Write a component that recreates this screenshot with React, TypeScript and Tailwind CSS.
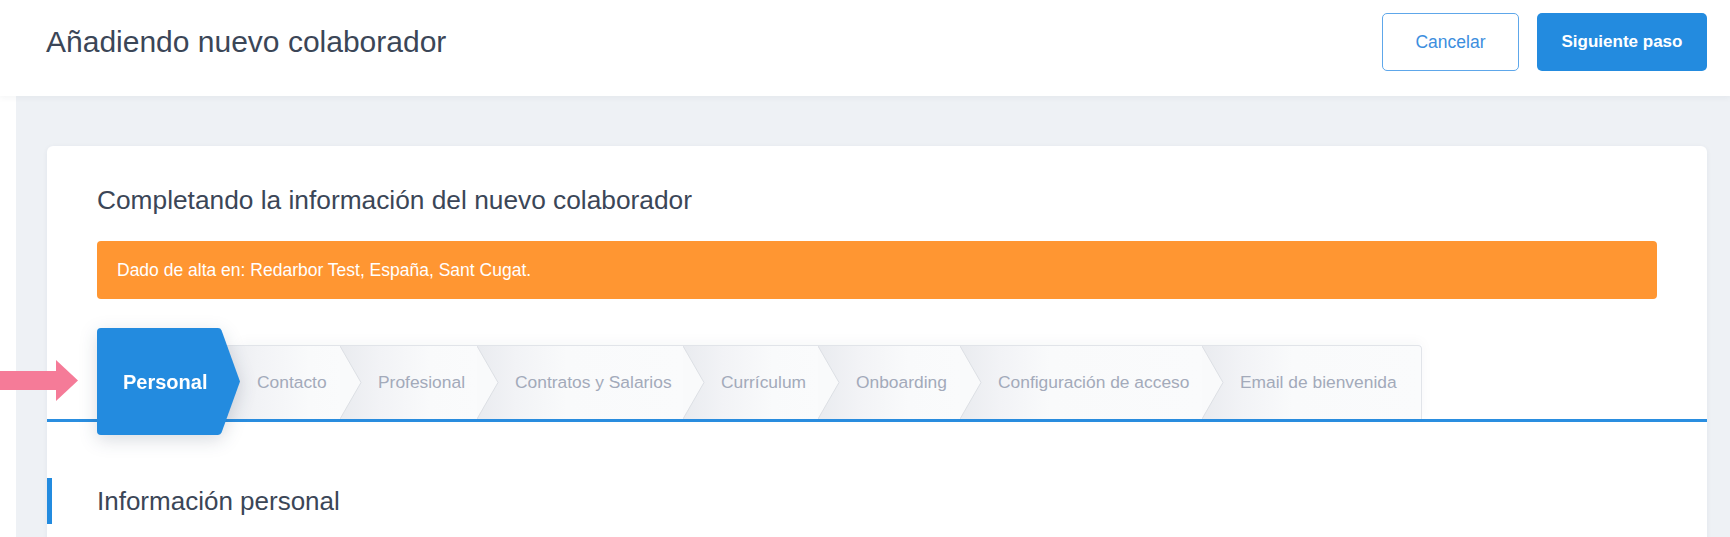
const steps = [
  { label: "Contacto", w: "w-[121px]" },
  { label: "Profesional", w: "w-[137px]" },
  { label: "Contratos y Salarios", w: "w-[206px]" },
  { label: "Currículum", w: "w-[135px]" },
  { label: "Onboarding", w: "w-[142px]" },
  { label: "Configuración de acceso", w: "w-[242px]" },
  { label: "Email de bienvenida", w: "w-[220px]" },
];

function BlueTab() {
  return (
    <div className="relative z-20 -mb-[16px] h-[107px] w-[143px] shrink-0 drop-shadow-[0_5px_9px_rgba(20,40,70,0.16)]">
      <svg className="absolute inset-0" width="143" height="107" viewBox="0 0 143 107">
        <path
          d="M4 0 H121 Q123.6 0 124.6 2.4 L143 53.5 L124.6 104.6 Q123.6 107 121 107 H4 Q0 107 0 103 V4 Q0 0 4 0 Z"
          fill="#238bdf"
        />
      </svg>
      <span className="relative flex h-full items-center pl-[26px] text-[20px] font-bold text-white">Personal</span>
    </div>
  );
}

function GrayTab({ label, w, index, last }: { label: string; w: string; index: number; last: boolean }) {
  const first = index === 0;
  return (
    <div
      className={
        "relative flex h-[74px] shrink-0 items-center whitespace-nowrap border-t border-[#e1e4e9] bg-[linear-gradient(90deg,#e9ebef_0px,#f2f3f6_40px,#f9fafb_90px,#fafbfc_100%)] pl-[38px] text-[17.4px] text-[#a3aaba] " +
        w +
        " " +
        (first ? "-ml-[21px] " : "") +
        (last ? "rounded-tr-[4px] border-r" : "")
      }
    >
      {!first && (
        <svg className="absolute left-0 top-0" width="22" height="73" viewBox="0 0 22 73">
          <polygon points="0,0 21,36.5 0,73" fill="#f9fafb" />
          <polyline points="0,0 21,36.5 0,73" fill="none" stroke="#dcdfe4" strokeWidth="1" />
        </svg>
      )}
      <span className="relative">{label}</span>
    </div>
  );
}

export default function App() {
  return (
    <div className="relative min-h-screen overflow-hidden bg-white font-['Liberation_Sans',Arial,sans-serif]">
      <header className="relative z-10 flex h-[96px] items-start justify-between bg-white pl-[46px] pr-[23px] shadow-[0_2px_6px_rgba(30,50,80,0.05)]">
        <h1 className="mt-[24px] text-[30px] font-normal leading-[36px] text-[#3b4657]">Añadiendo nuevo colaborador</h1>
        <div className="mt-[13px] flex gap-[18px]">
          <button className="h-[58px] w-[137px] rounded-[5px] border border-[#5ea7ea] bg-white text-[17.5px] text-[#3c8ede]">
            Cancelar
          </button>
          <button className="h-[58px] w-[170px] rounded-[5px] bg-[#238bdf] text-[17px] font-bold text-white">
            Siguiente paso
          </button>
        </div>
      </header>
      <div className="flex">
        <div className="w-[16px] shrink-0 bg-white" />
        <main className="flex-1 bg-[#eef1f5] pl-[31px] pr-[23px] pt-[50px]">
          <section className="rounded-t-[6px] bg-white px-[50px] pb-[80px] pt-[39px] shadow-[0_1px_5px_rgba(30,50,80,0.06)]">
            <h2 className="text-[26.3px] font-normal leading-[30px] text-[#3b4657]">
              Completando la información del nuevo colaborador
            </h2>
            <div className="mt-[26px] flex h-[58px] items-center rounded-[4px] bg-[#ff9632] px-[20px] text-[17.5px] text-white">
              Dado de alta en: Redarbor Test, España, Sant Cugat.
            </div>
            <div className="-mx-[50px] mt-[29px] flex items-end border-b-[3px] border-[#2a8ee0] px-[50px]">
              <BlueTab />
              <div className="flex shadow-[0_-3px_12px_rgba(30,50,80,0.04)]">
                {steps.map((s, i) => (
                  <GrayTab key={s.label} label={s.label} w={s.w} index={i} last={i === steps.length - 1} />
                ))}
              </div>
            </div>
            <div className="-ml-[50px] mt-[56px] flex h-[46px] items-center border-l-[5px] border-[#238bdf] pl-[45px] text-[26px] text-[#3b4657]">
              Información personal
            </div>
          </section>
        </main>
      </div>
      <svg className="absolute left-0 top-[360px]" width="78" height="41" viewBox="0 0 78 41">
        <rect x="0" y="11" width="57" height="19" fill="#f57b98" />
        <polygon points="56,0 78,20.5 56,41" fill="#f57b98" />
      </svg>
    </div>
  );
}
